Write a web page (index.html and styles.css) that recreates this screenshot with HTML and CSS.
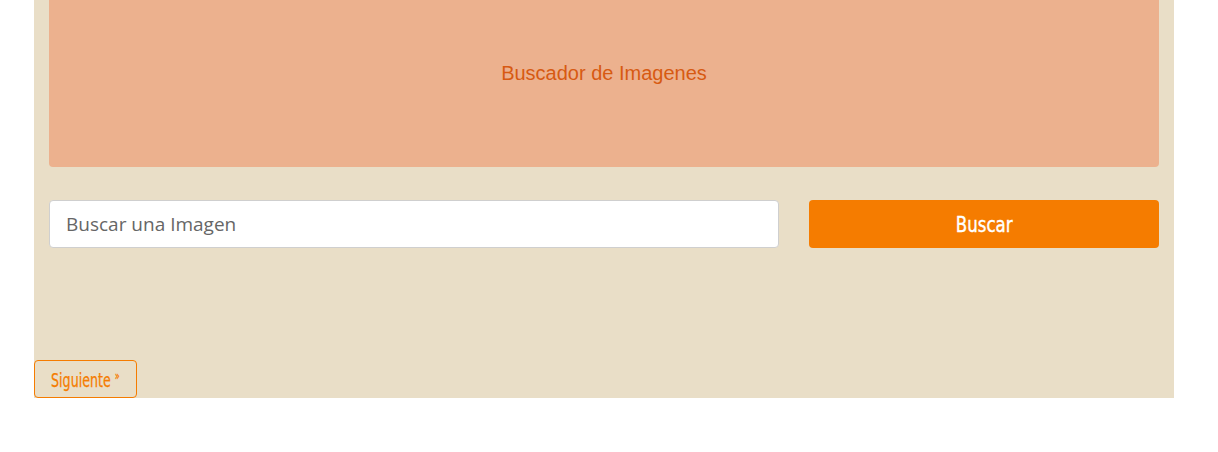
FILE: index.html
```html
<!DOCTYPE html>
<html lang="es">
<head>
<meta charset="utf-8">
<title>Buscador de Imagenes</title>
<link rel="stylesheet" href="styles.css">
</head>
<body>
<div class="container">
  <div class="jumbotron">
    <p class="lead">Buscador de Imagenes</p>
  </div>
  <form class="search-row">
    <div class="col-input">
      <input class="search-input" type="text" placeholder="Buscar una Imagen">
    </div>
    <div class="col-button">
      <button class="btn-search" type="button"><span class="narrow-search">Buscar</span></button>
    </div>
  </form>
  <div class="pager">
    <button class="btn-next" type="button"><span class="narrow-next">Siguiente <span class="raquo">&raquo;</span></span></button>
  </div>
</div>
</body>
</html>
```

FILE: styles.css
```css
* { box-sizing: border-box; }
html, body { margin: 0; padding: 0; background: #ffffff; }
body { font-family: "Liberation Sans", Arial, sans-serif; }

.container {
  width: 1140px;
  margin-left: 34px;
  background: #e9dec7;
  height: 398px;
  display: flex;
  flex-direction: column;
}

.jumbotron {
  margin: 0 15px;
  height: 167px;
  background: #ecb18e;
  border-radius: 0 0 4px 4px;
  display: flex;
  justify-content: center;
  padding-top: 61px;
}

.lead {
  margin: 0;
  font-family: "Liberation Sans", Arial, sans-serif;
  font-size: 20px;
  line-height: 24px;
  color: #d75a12;
}

.search-row {
  display: flex;
  margin: 33px 0 0 0;
  padding: 0 15px;
  gap: 30px;
}

.col-input { width: 730px; }
.col-button { width: 350px; }

.search-input {
  width: 100%;
  height: 48px;
  border: 1px solid #cfcfcf;
  border-radius: 4px;
  background: #ffffff;
  padding: 0 16px;
  font-family: "Open Sans", "DejaVu Sans", sans-serif;
  font-size: 19px;
  color: #555;
  outline: none;
}
.search-input::placeholder { color: #666666; }

.btn-search {
  width: 100%;
  height: 48px;
  border: none;
  border-radius: 4px;
  background: #f57c00;
  color: #ffffff;
  font-family: "DejaVu Sans Condensed", "DejaVu Sans", sans-serif;
  font-stretch: condensed;
  font-size: 21px;
  padding: 2px 0 0 0;
  cursor: pointer;
  -webkit-text-stroke: 0.4px #ffffff;
}

.narrow-search {
  display: inline-block;
  transform: scaleX(0.88);
}

.pager {
  margin-top: auto;
  display: flex;
}

.btn-next {
  height: 38px;
  width: 103px;
  border: 1px solid #f57c00;
  border-radius: 4px;
  background: transparent;
  color: #f57c00;
  font-family: "DejaVu Sans Condensed", "DejaVu Sans", sans-serif;
  font-stretch: condensed;
  font-size: 19px;
  padding: 2px 0 0 0;
  cursor: pointer;
  white-space: nowrap;
  -webkit-text-stroke: 0.25px #f57c00;
}

.narrow-next {
  display: inline-block;
  transform: scaleX(0.74);
}

.raquo {
  font-size: 12px;
  vertical-align: 7px;
}
```
